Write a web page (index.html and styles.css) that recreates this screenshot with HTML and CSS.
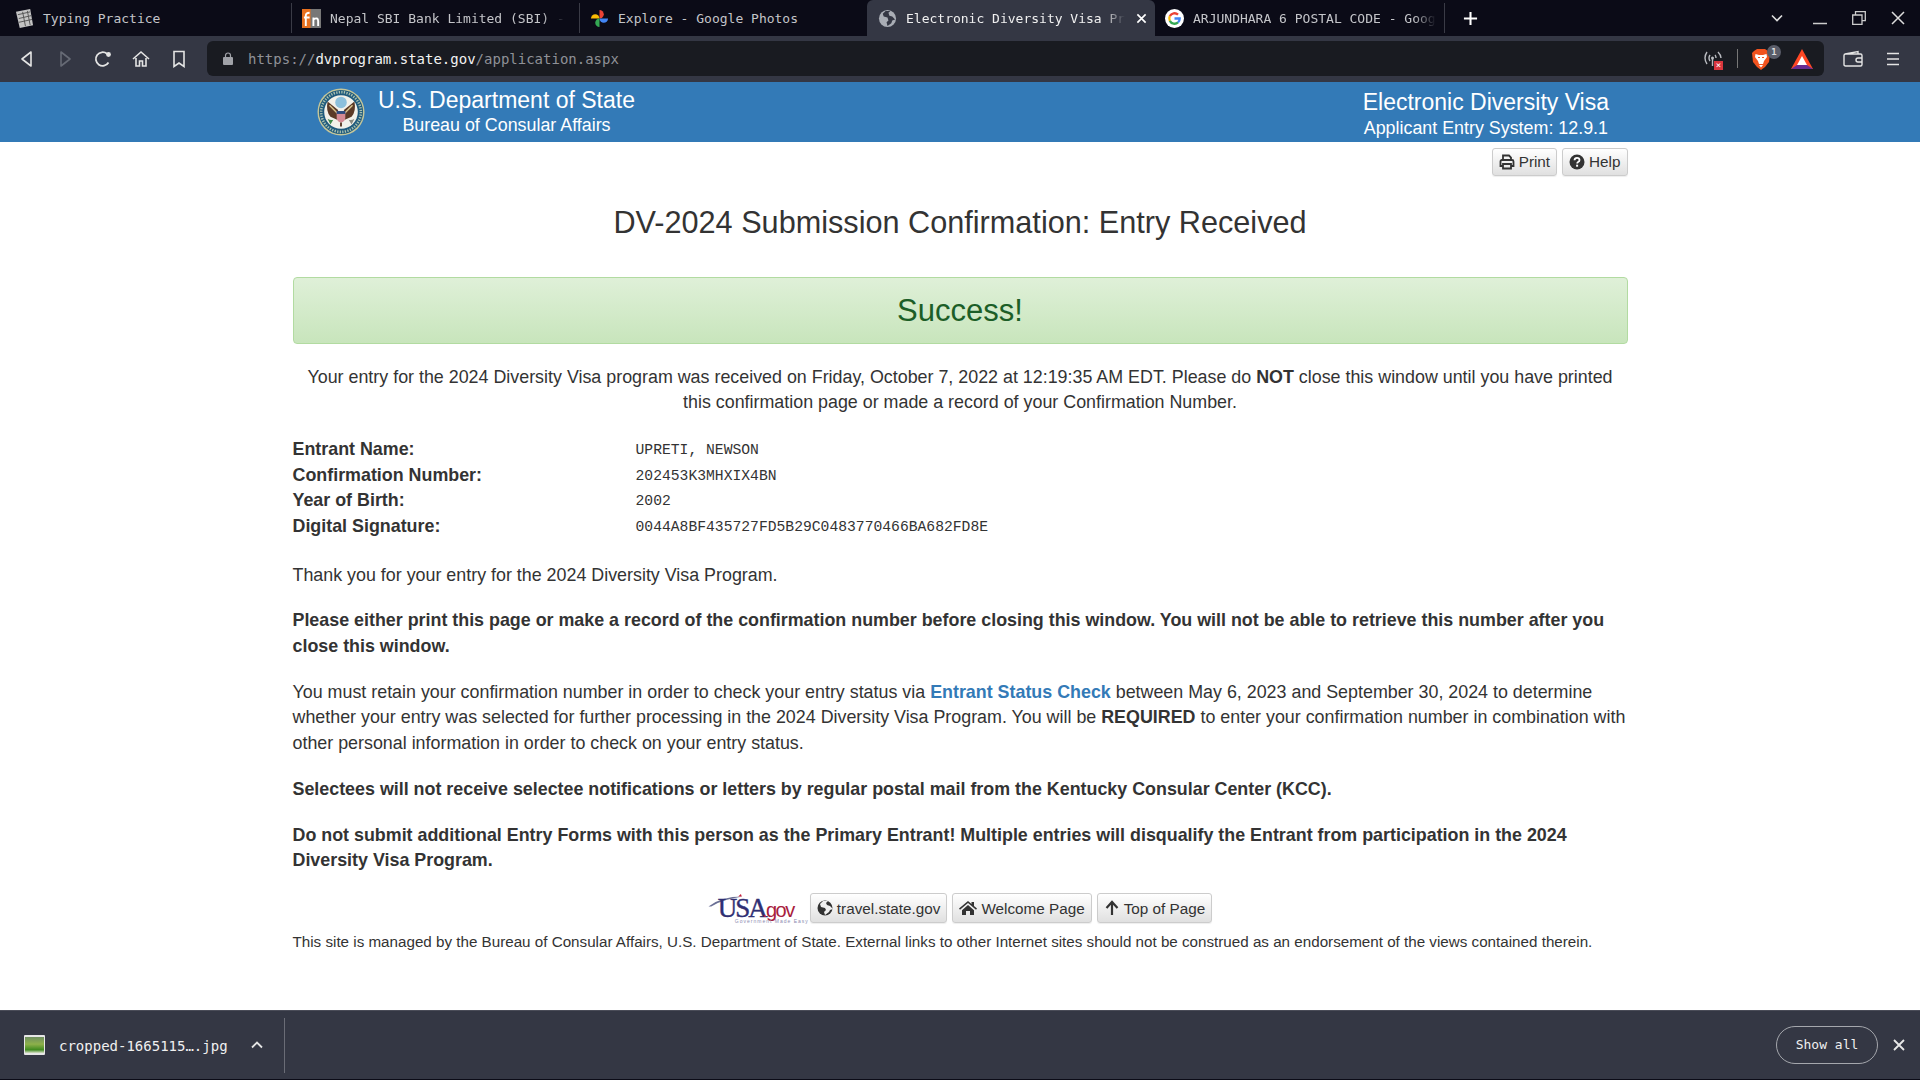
FILE: index.html
```html
<!DOCTYPE html>
<html lang="en">
<head>
    <meta charset="UTF-8">
    <title>Electronic Diversity Visa Program</title>
    <link rel="stylesheet" href="styles.css">
</head>
<body>
    <div class="tabstrip">
        <div class="tab tab-first">
            <svg class="favicon" viewBox="0 0 20 20"><path d="M1 3 16 0l3 17-14 3z" fill="#c4c4c4"/><path d="M3 6 16 3M4 10l13-3M4 14l14-3M8 3l3 15M13 2l3 15" stroke="#555" stroke-width="1"/></svg>
            <span class="tab-title tab-title-full">Typing Practice</span>
        </div>
        <div class="tab tab-mid">
            <svg class="favicon" viewBox="0 0 20 20"><rect width="20" height="20" fill="#777"/><rect width="9" height="20" fill="#e8701e"/><path d="M4 18V7q0-3 4-3M2 9h6M12 18V9m0 2q5-3 5 2v5" stroke="#fff" stroke-width="2" fill="none"/></svg>
            <span class="tab-title">Nepal SBI Bank Limited (SBI) -</span>
        </div>
        <div class="tab tab-photos">
            <svg class="favicon" viewBox="0 0 20 20"><path d="M1 10A4.500 4.500 0 0 1 10 10z" fill="#fbbc04"/><path d="M10 1A4.500 4.500 0 0 1 10 10z" fill="#ea4335"/><path d="M19 10A4.500 4.500 0 0 1 10 10z" fill="#4285f4"/><path d="M10 19A4.500 4.500 0 0 1 10 10z" fill="#34a853"/></svg>
            <span class="tab-title tab-title-full">Explore - Google Photos</span>
        </div>
        <div class="tab tab-active">
            <svg class="favicon globe" viewBox="0 0 20 20"><circle cx="10" cy="10" r="9" fill="#a9adb5"/><path d="M8 2 5 5l1 3 4 1 1 3-2 2 1 4 4-3 1-3 3-1-3-3-3-1-1-3 2-2z" fill="#343744"/></svg>
            <span class="tab-title">Electronic Diversity Visa Pr</span>
            <svg class="tab-close" viewBox="0 0 12 12"><path d="M1.500 1.500l9 9m0-9-9 9" stroke="#fff" stroke-width="1.800"/></svg>
        </div>
        <div class="tab tab-last">
            <svg class="favicon" viewBox="0 0 20 20"><circle cx="10" cy="10" r="10" fill="#fff"/><path d="M5.100 7.500A5.500 5.500 0 0 1 13.700 5.900" stroke="#ea4335" stroke-width="2.400" fill="none"/><path d="M5.100 7.500a5.500 5.500 0 0 0 0 5" stroke="#fbbc04" stroke-width="2.400" fill="none"/><path d="M5.100 12.500a5.500 5.500 0 0 0 8.600 1.600" stroke="#34a853" stroke-width="2.400" fill="none"/><path d="M13.700 14.100a5.500 5.500 0 0 0 1.800-4.100H10" stroke="#4285f4" stroke-width="2.400" fill="none"/></svg>
            <span class="tab-title">ARJUNDHARA 6 POSTAL CODE - Goog</span>
        </div>
        <svg class="newtab" viewBox="0 0 16 16"><path d="M8 1v14M1 8h14" stroke="#fff" stroke-width="2.200"/></svg>
        <div class="window-controls">
            <svg class="win-chevron" viewBox="0 0 12 8"><path d="M1 1.500l5 5 5-5" stroke="#ddd" stroke-width="1.600" fill="none"/></svg>
            <svg class="win-icon" viewBox="0 0 14 14"><path d="M0 12.500h14" stroke="#ccc" stroke-width="1.500"/></svg>
            <svg class="win-icon" viewBox="0 0 14 14"><path d="M3.500 3.500V.7h9.800v9h-3M.7 4h9.300v9.300H.7z" stroke="#ccc" stroke-width="1.300" fill="none"/></svg>
            <svg class="win-icon" viewBox="0 0 14 14"><path d="M1 1l12 12m0-12L1 13" stroke="#ddd" stroke-width="1.500"/></svg>
        </div>
    </div>

    <div class="toolbar">
        <div class="nav-icons">
            <svg viewBox="0 0 16 18"><path d="M12 2 3 9l9 7z" stroke="#e4e4e4" stroke-width="1.600" fill="none" stroke-linejoin="round"/></svg>
            <svg viewBox="0 0 16 18"><path d="M4 2l9 7-9 7z" stroke="#666a75" stroke-width="1.600" fill="none" stroke-linejoin="round"/></svg>
            <svg viewBox="0 0 18 18"><path d="M14.500 12.500A6.800 6.800 0 1 1 13 3.800" stroke="#e4e4e4" stroke-width="1.800" fill="none"/><circle cx="14.500" cy="4.500" r="2.400" fill="#e4e4e4"/></svg>
            <svg viewBox="0 0 18 18"><path d="M1 9l8-7 8 7M4 8v8h3.500v-5h3v5H14V8" stroke="#e4e4e4" stroke-width="1.600" fill="none"/></svg>
            <svg viewBox="0 0 18 18"><path d="M4 1.500h10v15l-5-3.500-5 3.500z" stroke="#e4e4e4" stroke-width="1.600" fill="none"/></svg>
        </div>
        <div class="urlbar">
            <svg class="lock" viewBox="0 0 10 13"><path d="M2.500 5V3.500a2.500 2.500 0 0 1 5 0V5" stroke="#a0a2a8" stroke-width="1.200" fill="none"/><rect y="5" width="10" height="8" rx="1" fill="#a0a2a8"/></svg>
            <span class="url"><span class="url-dim">https://</span><span class="url-host">dvprogram.state.gov</span><span class="url-dim">/application.aspx</span></span>
            <div class="url-right">
                <span class="cast">
                    <svg viewBox="0 0 20 20"><path d="M4 3Q0 9 4 15M7 6q-2 3 0 6M15 3q3 3 3 6M12 6q1 1 1 3" stroke="#b9bbc0" stroke-width="1.400" fill="none"/><circle cx="9.500" cy="9" r="1.500" fill="#b9bbc0"/><path d="M9.500 10v7" stroke="#b9bbc0" stroke-width="1.400"/></svg>
                    <i class="cast-x">×</i>
                </span>
                <span class="url-sep"></span>
                <span class="brave">
                    <svg viewBox="0 0 18 22"><path d="M5 1h8l3 2 2 2-1 9-4 5-4 3-4-3-4-5L0 5l2-2z" fill="#f1531f"/><path d="M3.500 6 7 7h4l3.500-1 .5 3-3 4-1 3H7l-1-3-3-4zM7 17h4l-2 2.500z" fill="#fff"/><path d="M6 9.500h2M10 9.500h2" stroke="#f1531f" stroke-width="1.200"/></svg>
                    <b class="badge">1</b>
                </span>
                <svg class="bat" viewBox="0 0 22 20"><path d="M11 0l11 20H0z" fill="#ff4724"/><path d="M11 7l5 9H6z" fill="#fff"/><path d="M0 20l6-4h10l6 4z" fill="#662d91"/></svg>
            </div>
        </div>
        <div class="toolbar-right">
            <svg class="wallet" viewBox="0 0 20 18"><path d="M2 4 15 1.500V4M1 5.500q0-1.500 1.500-1.500h15q1.500 0 1.500 1.500v9q0 1.500-1.500 1.500h-15Q1 16 1 14.500zM19 8h-4q-2 0-2 2t2 2h4" stroke="#e4e4e4" stroke-width="1.400" fill="none"/></svg>
            <svg class="burger" viewBox="0 0 14 14"><path d="M1 1.500h12M1 7h12M1 12.500h12" stroke="#e4e4e4" stroke-width="1.500"/></svg>
        </div>
    </div>

    <div class="page">
        <header class="banner">
            <div class="agency">
                <svg class="seal" viewBox="0 0 50 50">
                    <circle cx="25" cy="25" r="24.500" fill="#c4c69a"/>
                    <circle cx="25" cy="25" r="23" fill="#1f5a7c"/>
                    <circle cx="25" cy="25" r="23" fill="none" stroke="#a9c0b0" stroke-width="3" stroke-dasharray="1.500 1.500" transform="scale(.9) translate(2.800 2.800)"/>
                    <circle cx="25" cy="25" r="17.500" fill="#f2f1ea"/>
                    <circle cx="25" cy="15" r="6" fill="#8cc0dc"/>
                    <path d="M22 23 11 14q-2 10 3 16l7 3zM28 23l11-9q2 10-3 16l-7 3z" fill="#5b3a26"/>
                    <path d="M13 18l8 8M37 18l-8 8" stroke="#d7c48c" stroke-width="1.500"/>
                    <path d="M20.500 24h9v7q0 4-4.500 5-4.500-1-4.500-5z" fill="#d48a94"/>
                    <path d="M20.500 24h9v3h-9z" fill="#2c4a7c"/>
                    <path d="M11 32q3 2 6 1l-3 5z" fill="#3f8a4a"/>
                    <path d="M39 32q-3 2-6 1l3 5z" fill="#8a8a80"/>
                    <path d="M25 36v4" stroke="#5b3a26" stroke-width="2"/>
                </svg>
                <div class="agency-text">
                    <div class="agency-name">U.S. Department of State</div>
                    <div class="agency-sub">Bureau of Consular Affairs</div>
                </div>
            </div>
            <div class="system">
                <div class="system-name">Electronic Diversity Visa</div>
                <div class="system-sub">Applicant Entry System: 12.9.1</div>
            </div>
        </header>

        <main class="container">
            <div class="top-buttons">
                <a class="btn">
                    <svg class="fa" viewBox="0 0 16 16"><path d="M4 6V1.500h6l2 2V6M4 12H1.500V7.500q0-1.500 1.500-1.500h10q1.500 0 1.500 1.500V12H12M4 10h8v4.500H4z" stroke="#333" stroke-width="1.800" fill="none"/></svg>
                    Print
                </a>
                <a class="btn">
                    <svg class="fa" viewBox="0 0 16 16"><circle cx="8" cy="8" r="7.500" fill="#333"/><path d="M5.500 6.200Q5.700 3.800 8 3.800q2.500 0 2.500 2.200 0 1.300-1.400 2-.9.500-.9 1.500" stroke="#fff" stroke-width="1.800" fill="none"/><rect x="7.100" y="10.700" width="2" height="2" fill="#fff"/></svg>
                    Help
                </a>
            </div>

            <h1 class="page-title">DV-2024 Submission Confirmation: Entry Received</h1>

            <div class="alert-success">Success!</div>

            <p class="received">Your entry for the 2024 Diversity Visa program was received on Friday, October 7, 2022 at 12:19:35 AM EDT. Please do <b>NOT</b> close this window until you have printed this confirmation page or made a record of your Confirmation Number.</p>

            <dl class="entry">
                <dt>Entrant Name:</dt><dd>UPRETI, NEWSON</dd>
                <dt>Confirmation Number:</dt><dd>202453K3MHXIX4BN</dd>
                <dt>Year of Birth:</dt><dd>2002</dd>
                <dt>Digital Signature:</dt><dd>0044A8BF435727FD5B29C0483770466BA682FD8E</dd>
            </dl>

            <p>Thank you for your entry for the 2024 Diversity Visa Program.</p>
            <p><b>Please either print this page or make a record of the confirmation number before closing this window. You will not be able to retrieve this number after you close this window.</b></p>
            <p>You must retain your confirmation number in order to check your entry status via <a class="link">Entrant Status Check</a> between May 6, 2023 and September 30, 2024 to determine whether your entry was selected for further processing in the 2024 Diversity Visa Program. You will be <b>REQUIRED</b> to enter your confirmation number in combination with other personal information in order to check on your entry status.</p>
            <p><b>Selectees will not receive selectee notifications or letters by regular postal mail from the Kentucky Consular Center (KCC).</b></p>
            <p><b>Do not submit additional Entry Forms with this person as the Primary Entrant! Multiple entries will disqualify the Entrant from participation in the 2024 Diversity Visa Program.</b></p>

            <div class="footer-links">
                <div class="usagov">
                    <svg class="swoosh" viewBox="0 0 50 20"><path d="M0 15Q14 4 38 4 16 7 3 15z" fill="#6a6f95"/><path d="M33 4l3-3 1 3z" fill="#c8203a"/></svg>
                    <span class="usa">USA</span><span class="gov">.gov</span>
                    <span class="usa-tag">Government Made Easy</span>
                </div>
                <a class="btn">
                    <svg class="fa" viewBox="0 0 16 16"><circle cx="8" cy="8" r="7.500" fill="#333"/><path d="M6 1 3 4l1 3 4 1 1 2-2 2 1 3 4-3 1-2 3-1-3-3-3-1-1-2 2-2z" fill="#f0f0f0"/></svg>
                    travel.state.gov
                </a>
                <a class="btn">
                    <svg class="fa fa-home" viewBox="0 0 18 16"><path d="M9 1 0 8.500l1 1.200L9 3l8 6.700 1-1.200-3-2.500V2h-2.500v1.900z" fill="#333"/><path d="M3 10.200 9 5l6 5.200V15h-4v-4H7v4H3z" fill="#333"/></svg>
                    Welcome Page
                </a>
                <a class="btn">
                    <svg class="fa" viewBox="0 0 16 16"><path d="M8 15V2.500M2.500 8 8 2l5.500 6" stroke="#333" stroke-width="2.200" fill="none"/></svg>
                    Top of Page
                </a>
            </div>

            <p class="disclaimer">This site is managed by the Bureau of Consular Affairs, U.S. Department of State. External links to other Internet sites should not be construed as an endorsement of the views contained therein.</p>
        </main>
    </div>

    <div class="downloads">
        <div class="download-item">
            <svg class="file-thumb" viewBox="0 0 21 20"><defs><linearGradient id="thumb" x1="0" y1="0" x2="0" y2="1"><stop offset="0" stop-color="#6f8f5f"/><stop offset=".45" stop-color="#8db04a"/><stop offset=".8" stop-color="#3f8a1f"/><stop offset="1" stop-color="#d8e0c8"/></linearGradient></defs><rect width="21" height="20" rx="1" fill="#e6e6e6"/><rect x="1" y="2" width="19" height="16" fill="url(#thumb)"/></svg>
            <span class="file-name">cropped-1665115….jpg</span>
            <svg class="file-chevron" viewBox="0 0 12 8"><path d="M1 6.500l5-5 5 5" stroke="#e4e4e4" stroke-width="1.800" fill="none"/></svg>
        </div>
        <div class="downloads-right">
            <span class="show-all">Show all</span>
            <svg class="downloads-close" viewBox="0 0 12 12"><path d="M1 1l10 10m0-10L1 11" stroke="#e8e8e8" stroke-width="1.800"/></svg>
        </div>
    </div>
</body>
</html>
```

FILE: styles.css
```css
* {
    box-sizing: border-box;
}

body {
    margin: 0;
    height: 100vh;
    overflow: hidden;
    display: flex;
    flex-direction: column;
    font-family: "Liberation Sans", Arial, sans-serif;
    font-size: 17.87px;
    line-height: 25.6px;
    color: #333;
    background-color: #fff;
}

/* browser chrome */
.tabstrip {
    height: 36px;
    flex: none;
    display: flex;
    align-items: center;
    background-color: #0b0b17;
    font-family: "DejaVu Sans Mono", monospace;
    font-size: 13px;
    color: #c4c5c9;
}

.tab {
    height: 36px;
    display: flex;
    align-items: center;
    white-space: nowrap;
    flex: none;
}

.tab-title {
    padding-top: 2px;
    -webkit-mask-image: linear-gradient(to left, transparent 0, #000 22px);
    mask-image: linear-gradient(to left, transparent 0, #000 22px);
}

.tab-title-full {
    -webkit-mask-image: none;
    mask-image: none;
}

.favicon {
    width: 19px;
    height: 19px;
    flex: none;
    margin-right: 9px;
}

.tab-first {
    width: 291px;
    padding-left: 15px;
}

.tab-mid {
    width: 288px;
    padding-left: 10px;
}

.tab-photos {
    width: 288px;
    padding-left: 10px;
}

.tab-active {
    width: 288px;
    padding: 0 8px 0 11px;
    background-color: #343744;
    border-radius: 6px 6px 0 0;
    color: #f0f0f0;
}

.tab-close {
    width: 11px;
    height: 11px;
    flex: none;
    margin-left: auto;
}

.tab-last {
    width: 290px;
    height: 30px;
    padding: 0 0 0 10px;
    border-right: 1px solid #3a3b46;
}

.tab-mid,
.tab-photos {
    height: 30px;
    border-left: 1px solid #3a3b46;
}

.newtab {
    width: 15px;
    height: 15px;
    margin-left: 18px;
}

.window-controls {
    margin-left: auto;
    display: flex;
    align-items: center;
    gap: 25px;
    padding-right: 15px;
}

.win-chevron {
    width: 12px;
    height: 8px;
    margin-right: 5px;
}

.win-icon {
    width: 14px;
    height: 14px;
}

.toolbar {
    height: 46px;
    flex: none;
    display: flex;
    align-items: center;
    padding: 0 0 0 18px;
    background-color: #343744;
}

.nav-icons {
    display: flex;
    align-items: center;
    gap: 20px;
    width: 189px;
}

.nav-icons svg {
    width: 18px;
    height: 18px;
}

.urlbar {
    width: 1617px;
    height: 35px;
    margin-top: -1px;
    display: flex;
    align-items: center;
    padding: 0 11px 0 16px;
    background-color: #191b21;
    border-radius: 6px;
    font-family: "DejaVu Sans Mono", monospace;
    font-size: 14px;
}

.lock {
    width: 10px;
    height: 13px;
    margin-right: 15px;
}

.url {
    padding-top: 2px;
}

.url-dim {
    color: #8f9197;
}

.url-host {
    color: #f2f2f2;
}

.url-right {
    margin-left: auto;
    display: flex;
    align-items: center;
}

.cast {
    position: relative;
    width: 20px;
    height: 20px;
}

.cast svg {
    width: 20px;
    height: 20px;
    display: block;
}

.cast-x {
    position: absolute;
    right: 0;
    bottom: -1px;
    width: 9px;
    height: 9px;
    background-color: #d9363e;
    color: #fff;
    font-size: 9px;
    line-height: 9px;
    text-align: center;
    font-style: normal;
}

.url-sep {
    width: 1px;
    height: 19px;
    margin: 0 14px;
    background-color: #777;
}

.brave {
    position: relative;
    width: 18px;
    height: 22px;
}

.brave svg {
    width: 18px;
    height: 22px;
    display: block;
}

.badge {
    position: absolute;
    left: 15px;
    top: -3px;
    width: 14px;
    height: 14px;
    border-radius: 50%;
    background-color: #5a5d69;
    color: #ddd;
    font-size: 9px;
    line-height: 14px;
    text-align: center;
}

.bat {
    width: 22px;
    height: 20px;
    margin-left: 21px;
}

.toolbar-right {
    display: flex;
    align-items: center;
    gap: 23px;
    margin-left: 19px;
}

.wallet {
    width: 20px;
    height: 18px;
}

.burger {
    width: 14px;
    height: 16px;
}

/* site */
.page {
    flex: 1;
    min-height: 0;
    overflow: hidden;
}

.banner {
    height: 60px;
    display: flex;
    justify-content: space-between;
    padding: 0 311px 0 317px;
    background-color: #337ab7;
    color: #fff;
    text-align: center;
}

.agency {
    display: flex;
    align-items: center;
    gap: 13px;
}

.seal {
    width: 48px;
    height: 48px;
}

.agency-name {
    font-size: 23px;
    line-height: 30px;
    padding-top: 1px;
}

.agency-sub {
    font-size: 17.87px;
    line-height: 21px;
    margin-bottom: 4px;
}

.system {
    padding-top: 5px;
}

.system-name {
    font-size: 23px;
    line-height: 31px;
}

.system-sub {
    font-size: 17.87px;
    line-height: 20px;
}

.container {
    width: 1335px;
    margin: 0 auto;
}

.top-buttons {
    display: flex;
    justify-content: flex-end;
    gap: 5px;
    padding-top: 6px;
}

.btn {
    display: inline-flex;
    align-items: center;
    gap: 4px;
    height: 28px;
    padding: 0 6px;
    border: 1px solid #ccc;
    border-radius: 3px;
    background: linear-gradient(to bottom, #fff 0, #e0e0e0 100%);
    box-shadow: 0 1px 1px rgba(0, 0, 0, 0.07);
    font-size: 15.28px;
    color: #333;
    white-space: nowrap;
}

.fa {
    width: 16px;
    height: 16px;
    flex: none;
}

.fa-home {
    width: 18px;
}

.page-title {
    margin: 26px 0 0;
    font-size: 30.65px;
    line-height: 40px;
    font-weight: 400;
    text-align: center;
}

.alert-success {
    height: 67px;
    margin-top: 35px;
    border: 1px solid #b2dba1;
    border-radius: 4px;
    background: linear-gradient(to bottom, #dff0d8 0, #c8e5bc 100%);
    color: #1c5e27;
    font-size: 31px;
    line-height: 65px;
    text-align: center;
}

p {
    margin: 0 0 20.3px;
}

.received {
    margin: 21px 0 0;
    line-height: 25px;
    text-align: center;
}

.entry {
    display: grid;
    grid-template-columns: 343px 1fr;
    margin: 22px 0 23.5px;
    line-height: 25.5px;
}

.entry dt {
    font-weight: 700;
}

.entry dd {
    margin: 0;
    padding-top: 1px;
    line-height: 24.5px;
    font-family: "Liberation Mono", monospace;
    font-size: 14.7px;
}

.link {
    color: #337ab7;
    font-weight: 700;
}

.footer-links {
    display: flex;
    justify-content: center;
    align-items: center;
    gap: 5px;
    margin-top: -2px;
}

.footer-links .btn {
    height: 30px;
}

.usagov {
    position: relative;
    width: 98px;
    height: 32px;
    margin-right: -1px;
    font-family: "Liberation Serif", serif;
    white-space: nowrap;
}

.swoosh {
    position: absolute;
    left: 0;
    top: 1px;
    width: 46px;
    height: 18px;
}

.usa {
    position: absolute;
    left: 10px;
    top: 3px;
    font-size: 27px;
    line-height: 26px;
    letter-spacing: -2px;
    color: #2f2f73;
    -webkit-text-stroke: 0.4px #2f2f73;
}

.gov {
    position: absolute;
    left: 54px;
    top: 8px;
    font-family: "Liberation Sans", sans-serif;
    font-size: 20px;
    line-height: 21px;
    letter-spacing: -1.5px;
    color: #a8203c;
}

.usa-tag {
    position: absolute;
    left: 27px;
    top: 26px;
    font-family: "Liberation Sans", sans-serif;
    font-size: 5px;
    line-height: 6px;
    letter-spacing: 1px;
    color: #8a8ab0;
}

.disclaimer {
    margin: 7px 0 0;
    font-size: 15.2px;
    line-height: 21px;
}

/* download shelf */
.downloads {
    height: 70px;
    flex: none;
    display: flex;
    align-items: center;
    justify-content: space-between;
    background-color: #343744;
    border-top: 1px solid #4a4c58;
    border-bottom: 1px solid #0b0b17;
    font-family: "DejaVu Sans Mono", monospace;
    color: #f0f0f0;
}

.download-item {
    width: 285px;
    height: 55px;
    display: flex;
    align-items: center;
    padding-left: 24px;
    border-right: 1px solid #6a6c76;
}

.file-thumb {
    width: 21px;
    height: 20px;
    margin-right: 14px;
}

.file-name {
    font-size: 14px;
    padding-top: 3px;
}

.file-chevron {
    width: 12px;
    height: 8px;
    margin-left: 23px;
}

.downloads-right {
    display: flex;
    align-items: center;
    gap: 15px;
    padding-right: 15px;
}

.show-all {
    width: 102px;
    height: 38px;
    border: 1px solid #a5a7ad;
    border-radius: 19px;
    font-size: 13px;
    line-height: 36px;
    text-align: center;
}

.downloads-close {
    width: 12px;
    height: 12px;
}
```
